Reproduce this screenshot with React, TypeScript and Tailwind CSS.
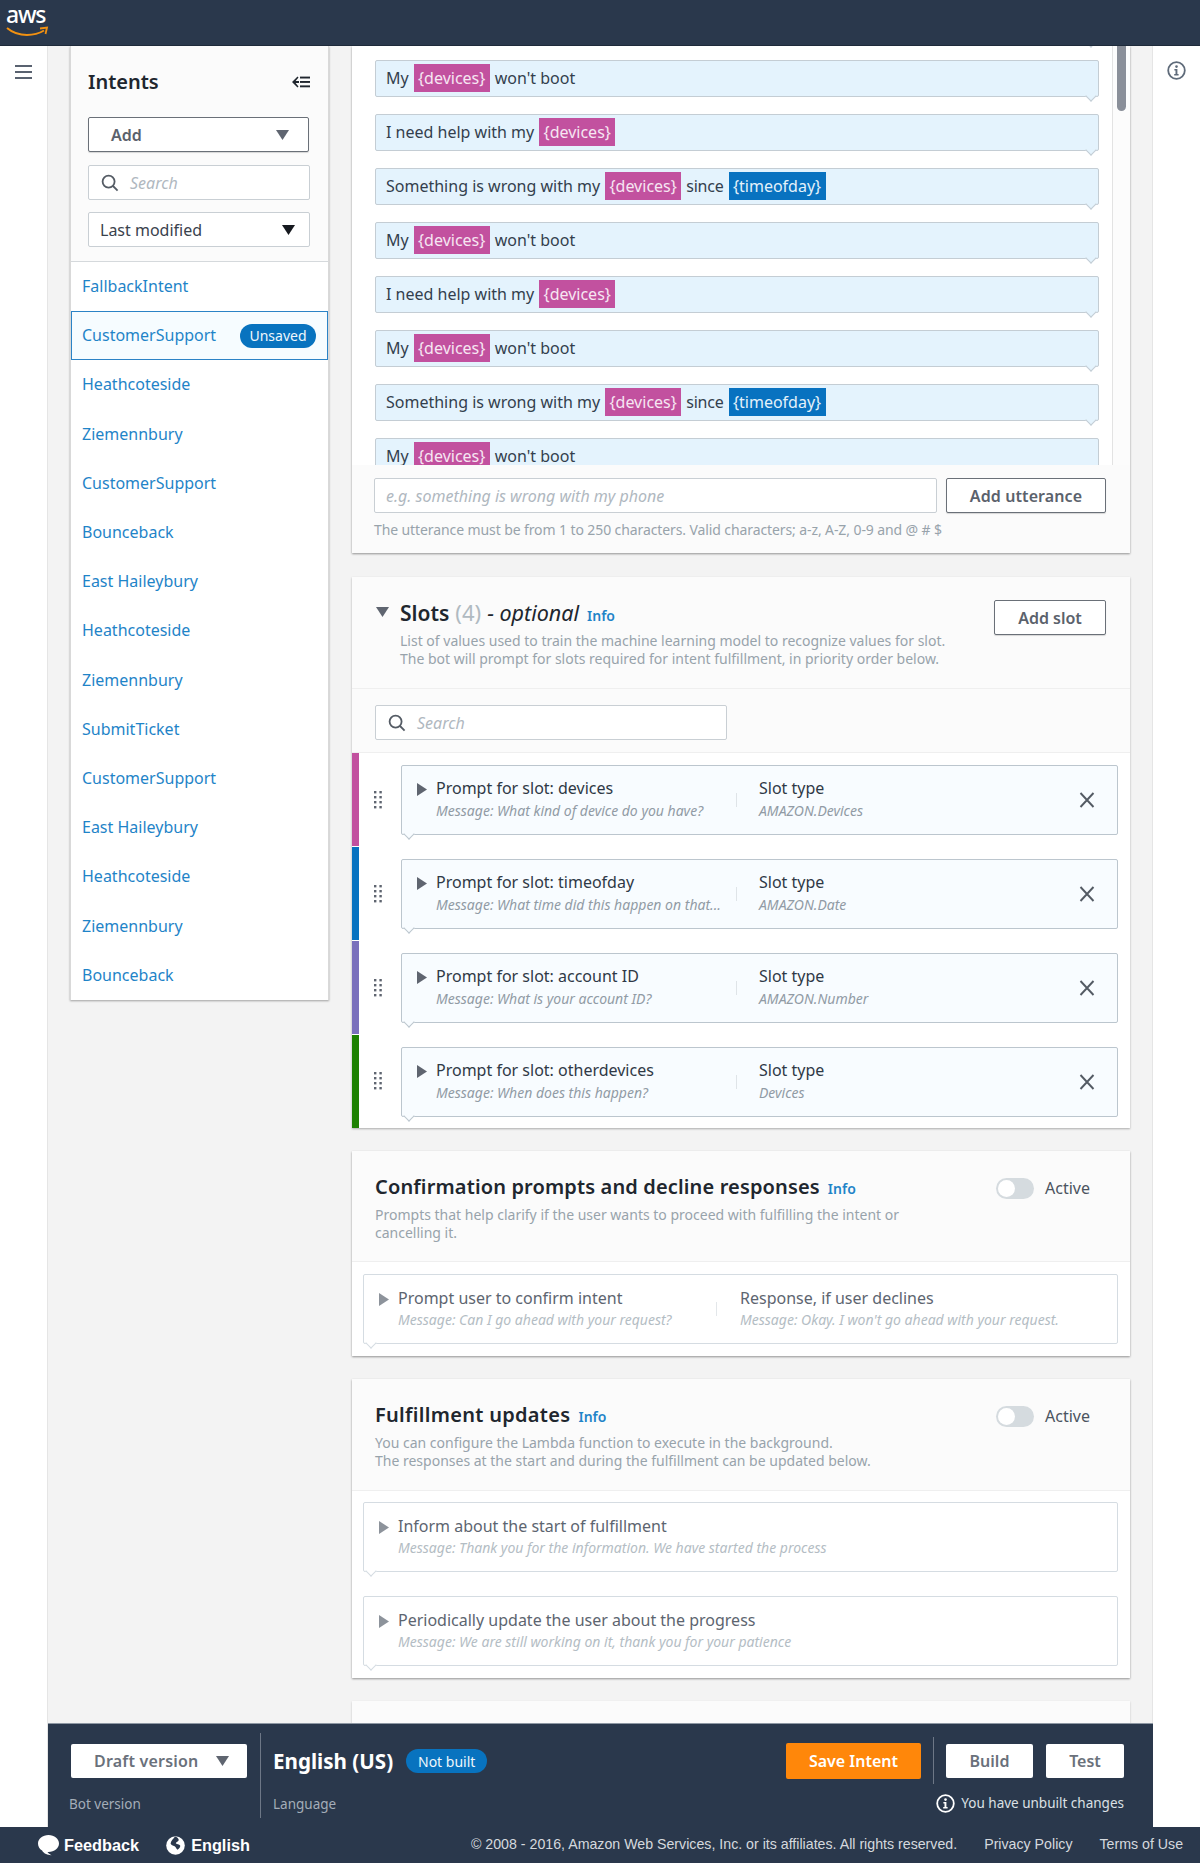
import React from "react";

const Chip = ({ c = "d" }: { c?: string }) =>
  c === "d" ? (
    <span className="mx-[5px] h-[28px] w-[76px] bg-[#c2519f] text-center leading-[28px] text-[#f6e6f2]">{"{devices}"}</span>
  ) : (
    <span className="mx-[5px] h-[28px] w-[97px] bg-[#0872c0] text-center leading-[28px] text-[#e3f1fa]">{"{timeofday}"}</span>
  );

const Utt = ({ children }: { children?: React.ReactNode }) => (
  <div className="relative mb-[17px] ml-[23px] flex h-[37px] w-[724px] items-center whitespace-pre rounded-[2px] border border-[#c4cdd4] bg-[#e4f3fd] pb-[1px] pl-[10px] text-[16px] text-[#333f4d]">
    {children}
    <span className="absolute bottom-[-4px] right-[3px] size-[8px] rotate-45 border-b border-r border-[#c4cdd4] bg-[#e4f3fd]" />
  </div>
);

const A = () => (<Utt>My<Chip />won't boot</Utt>);
const B = () => (<Utt>I need help with my<Chip /></Utt>);
const C = () => (<Utt>Something is wrong with my<Chip /><span className="tracking-[-0.2px]">since</span><Chip c="t" /></Utt>);

const Tri = ({ cls }: { cls: string }) => (
  <svg width="13" height="10" viewBox="0 0 13 10" className={cls}><path d="M0 0h13L6.500 10z" fill="currentColor" /></svg>
);
const RightTri = ({ cls }: { cls: string }) => (
  <svg width="10" height="13" viewBox="0 0 10 13" className={cls}><path d="M0 0l10 6.500L0 13z" fill="currentColor" /></svg>
);
const SearchIcon = () => (
  <svg width="18" height="18" viewBox="0 0 18 18" fill="none" stroke="#545b64" strokeWidth="1.8" className="shrink-0"><circle cx="7.6" cy="7.6" r="6" /><path d="M12 12l4.6 4.6" /></svg>
);
const InfoIcon = ({ color, size = 19 }: { color: string; size?: number }) => (
  <svg width={size} height={size} viewBox="0 0 19 19" className="shrink-0">
    <circle cx="9.5" cy="9.5" r="8.3" fill="none" stroke={color} strokeWidth="1.8" />
    <circle cx="9.5" cy="5.6" r="1.3" fill={color} />
    <path d="M7.4 8h3v5h1.2v1.4H7.2V13h1.3V9.4H7.4z" fill={color} />
  </svg>
);
const Info = ({ cls = "" }: { cls?: string }) => (
  <span className={`text-[14px] font-semibold text-[#1f84c8] ${cls}`}>Info</span>
);
const Handle = () => (
  <svg width="8" height="18" viewBox="0 0 8 18" fill="#5f6570" className="shrink-0">
    {[1, 6, 11, 16].map((y) => (
      <g key={y}><rect x="0" y={y - 1} width="2.4" height="2.4" /><rect x="5.4" y={y - 1} width="2.4" height="2.4" /></g>
    ))}
  </svg>
);

const CardTail = ({ border, bg }: { border: string; bg: string }) => (
  <span className={`absolute bottom-[-4px] left-[3px] size-[8px] rotate-45 border-b border-r ${border} ${bg}`} />
);

const Slot = ({ color, h, title, msg, type }: { color: string; h: string; title: string; msg: string; type: string }) => (
  <div className={`flex ${h}`}>
    <div className={`h-[93px] w-[7px] ${color}`} />
    <div className="flex w-[42px] items-center pl-[15px] pb-[1px]"><Handle /></div>
    <div className="relative mt-[12px] flex h-[70px] w-[717px] items-center rounded-[2px] border border-[#bcc6ce] bg-[#f8fcff]">
      <div className="flex w-[334px] items-start pb-[2px] pl-[15px]">
        <RightTri cls="mt-[7px] shrink-0 text-[#5f6570]" />
        <div className="ml-[9px] min-w-0">
          <div className="text-[16px] leading-[24px] text-[#2f3946]">{title}</div>
          <div className="whitespace-nowrap text-[14px] italic leading-[22px] text-[#919ba5]">{msg}</div>
        </div>
      </div>
      <div className="h-[14px] w-px bg-[#dfe4e8]" />
      <div className="flex-1 pb-[2px] pl-[22px]">
        <div className="text-[16px] leading-[24px] text-[#2f3946]">Slot type</div>
        <div className="text-[14px] italic leading-[22px] text-[#919ba5]">{type}</div>
      </div>
      <svg width="16" height="18" viewBox="0 0 16 18" fill="none" stroke="#545b64" strokeWidth="1.9" className="mr-[22px] shrink-0"><path d="M1.5 2l13 14M14.5 2l-13 14" /></svg>
      <CardTail border="border-[#bcc6ce]" bg="bg-[#f8fcff]" />
    </div>
  </div>
);

const Muted = ({ title, msg, title2, msg2 }: { title: string; msg: string; title2?: string; msg2?: string }) => (
  <div className="relative ml-[11px] flex h-[70px] w-[755px] items-center rounded-[2px] border border-[#d5dce2] bg-white">
    <div className={`flex items-start pb-[2px] pl-[15px] ${title2 ? "w-[352px]" : "flex-1"}`}>
      <RightTri cls="mt-[7px] shrink-0 text-[#8d939b]" />
      <div className="ml-[9px]">
        <div className="text-[16px] leading-[24px] text-[#5d6570]">{title}</div>
        <div className="mt-[-1px] whitespace-nowrap text-[14px] italic leading-[22px] text-[#b4bdc4]">{msg}</div>
      </div>
    </div>
    {title2 && <div className="h-[14px] w-px bg-[#e3e7ea]" />}
    {title2 && (
      <div className="flex-1 pb-[2px] pl-[23px]">
        <div className="text-[16px] leading-[24px] text-[#5d6570]">{title2}</div>
        <div className="mt-[-1px] whitespace-nowrap text-[14px] italic leading-[22px] text-[#b4bdc4]">{msg2}</div>
      </div>
    )}
    <CardTail border="border-[#d5dce2]" bg="bg-white" />
  </div>
);

const Toggle = () => (
  <div className="flex items-center">
    <div className="flex h-[21px] w-[38px] items-center rounded-full bg-[#d5dbdf] pl-[2px]">
      <div className="size-[17px] rounded-full bg-white" />
    </div>
    <span className="ml-[11px] text-[16px] text-[#4b5460]">Active</span>
  </div>
);

const Head = ({ title, h, track, children }: { title: string; h: string; track: string; children: React.ReactNode }) => (
  <div className={`relative border-b border-[#efefef] bg-[#fbfbfb] pl-[23px] pr-[39px] pt-[21px] ${h}`}>
    <div className="flex items-start justify-between">
      <div className="flex items-baseline">
        <span className={`text-[20px] font-semibold leading-[30px] text-[#20262e] ${track}`}>{title}</span>
        <Info cls="ml-[8px]" />
      </div>
      <div className="mt-[4px] pr-[1px]"><Toggle /></div>
    </div>
    <div className="mt-[4px] text-[14px] leading-[18px] text-[#98a3ab]">{children}</div>
  </div>
);

const items = ["FallbackIntent", "CustomerSupport", "Heathcoteside", "Ziemennbury", "CustomerSupport", "Bounceback", "East Haileybury", "Heathcoteside", "Ziemennbury", "SubmitTicket", "CustomerSupport", "East Haileybury", "Heathcoteside", "Ziemennbury", "Bounceback"];

const Sidebar = () => (
  <div className="h-[954px] w-[259px] shrink-0 border-x border-[#d9d9d9] bg-white shadow-[0_1px_2px_rgba(0,0,0,0.35)]">
    <div className="h-[216px] border-b border-[#d5d9dc] bg-[#fbfbfb] px-[17px] pt-[21px]">
      <div className="flex h-[30px] items-center justify-between">
        <span className="text-[20px] font-semibold text-[#20262e]">Intents</span>
        <svg width="18" height="12" viewBox="0 0 18 12" fill="#20262e" className="mr-[1px]">
          <path d="M5.5 0.5L0 6l5.5 5.500 1-1L3.600 7H7V5H3.600l2.900-3.500z" />
          <rect x="8" y="0.6" width="10" height="1.9" /><rect x="8" y="5" width="10" height="1.9" /><rect x="8" y="9.4" width="10" height="1.9" />
        </svg>
      </div>
      <div className="mt-[20px] flex h-[35px] w-[221px] items-center justify-between rounded-[2px] border border-[#6a7078] bg-white pl-[22px] pr-[19px] shadow-[0_1px_1px_rgba(0,0,0,0.15)]">
        <span className="text-[16px] font-semibold text-[#5b626c]">Add</span>
        <Tri cls="text-[#5f6570]" />
      </div>
      <div className="mt-[13px] flex h-[35px] w-[222px] items-center rounded-[2px] border border-[#c9cfd4] bg-white pl-[12px]">
        <SearchIcon />
        <span className="ml-[11px] text-[16px] italic text-[#b0b8bf]">Search</span>
      </div>
      <div className="mt-[12px] flex h-[35px] w-[222px] items-center justify-between rounded-[2px] border border-[#c9cfd4] bg-white pl-[11px] pr-[14px]">
        <span className="text-[16px] text-[#3a424d]">Last modified</span>
        <Tri cls="text-[#16191f]" />
      </div>
    </div>
    {items.map((t, i) =>
      i === 1 ? (
        <div key={i} className="flex h-[49.2px] items-center justify-between border border-[#2b83c6] bg-[#f6fcff] pl-[10px] pr-[11px] text-[16px] text-[#1f84c8]">
          <span className="pb-[1px]">{t}</span>
          <span className="flex h-[24px] w-[76px] items-center justify-center rounded-full bg-[#0873bf] text-[14px] text-[#eef7fc]">Unsaved</span>
        </div>
      ) : (
        <div key={i} className="flex h-[49.2px] items-center pb-[1px] pl-[11px] text-[16px] text-[#1f84c8]">{t}</div>
      )
    )}
  </div>
);

const UtteranceCard = () => (
  <div className="mb-[24px] h-[507px] overflow-hidden bg-white shadow-[0_1px_2px_rgba(0,0,0,0.4)]">
    <div className="relative h-[419px] overflow-hidden">
      <div className="mt-[-40px]">
        <Utt /><A /><B /><C /><A /><B /><A /><C /><A />
      </div>
      <div className="absolute right-0 top-0 h-full w-[18px] border-l border-[#e3e3e3] bg-[#fcfcfc]">
        <div className="ml-[4px] h-[65px] w-[9px] rounded-b-full bg-[#8a8f99]" />
      </div>
    </div>
    <div className="h-[88px] bg-[#fbfbfb] pl-[22px] pt-[13px]">
      <div className="flex">
        <div className="flex h-[35px] w-[563px] items-center rounded-[2px] border border-[#c9cfd4] bg-white pl-[11px] text-[16px] italic text-[#b0b8bf]">e.g. something is wrong with my phone</div>
        <div className="ml-[9px] flex h-[35px] w-[160px] items-center justify-center rounded-[2px] border border-[#6a7078] bg-white text-[16px] font-semibold tracking-[0.1px] text-[#5b626c] shadow-[0_1px_1px_rgba(0,0,0,0.15)]">Add utterance</div>
      </div>
      <div className="mt-[8px] text-[14px] leading-[18px] tracking-[-0.1px] text-[#98a3ab]">The utterance must be from 1 to 250 characters. Valid characters; a-z, A-Z, 0-9 and @ # $</div>
    </div>
  </div>
);

const SlotsCard = () => (
  <div className="mb-[23px] bg-white shadow-[0_1px_2px_rgba(0,0,0,0.3)]">
    <div className="relative flex h-[112px] border-b border-[#efefef] bg-[#fbfbfb] pl-[24px] pt-[20px]">
      <Tri cls="mt-[10px] text-[#5f6570]" />
      <div className="ml-[11px] flex-1">
        <div className="flex items-baseline">
          <span className="text-[21px] font-semibold leading-[30px] text-[#20262e]">Slots</span>
          <span className="ml-[6px] text-[22px] leading-[30px] text-[#b0bac1]">(4)</span>
          <span className="ml-[6px] text-[21.5px] italic leading-[30px] text-[#20262e]">- optional</span>
          <Info cls="ml-[8px]" />
        </div>
        <div className="mt-[4px] text-[14px] leading-[18px] text-[#98a3ab]">
          List of values used to train the machine learning model to recognize values for slot.<br />
          The bot will prompt for slots required for intent fulfillment, in priority order below.
        </div>
      </div>
      <div className="mr-[24px] mt-[3px] flex h-[35px] w-[112px] items-center justify-center rounded-[2px] border border-[#6a7078] bg-white text-[16px] font-semibold text-[#5b626c] shadow-[0_1px_1px_rgba(0,0,0,0.15)]">Add slot</div>
    </div>
    <div className="h-[64px] border-b border-[#efefef] bg-[#fbfbfb] pl-[23px] pt-[16px]">
      <div className="flex h-[35px] w-[352px] items-center rounded-[2px] border border-[#c9cfd4] bg-white pl-[12px]">
        <SearchIcon />
        <span className="ml-[11px] text-[16px] italic text-[#b0b8bf]">Search</span>
      </div>
    </div>
    <Slot h="h-[94px]" color="bg-[#c2519f]" title="Prompt for slot: devices" msg="Message: What kind of device do you have?" type="AMAZON.Devices" />
    <Slot h="h-[94px]" color="bg-[#0872c0]" title="Prompt for slot: timeofday" msg="Message: What time did this happen on that..." type="AMAZON.Date" />
    <Slot h="h-[94px]" color="bg-[#7a70bc]" title="Prompt for slot: account ID" msg="Message: What is your account ID?" type="AMAZON.Number" />
    <Slot h="h-[93px]" color="bg-[#1d8102]" title="Prompt for slot: otherdevices" msg="Message: When does this happen?" type="Devices" />
  </div>
);

const Bottom = () => (
  <div className="flex h-[104px] shrink-0 border-t border-[#8d97a3] bg-[#2a384c] text-[13.5px]">
    <div className="w-[212px] pl-[21px] pt-[20px]">
      <div className="ml-[2px] flex h-[34px] w-[176px] items-center justify-between rounded-[2px] bg-white pl-[23px] pr-[18px] text-[16px] font-semibold tracking-[0.2px] text-[#6a717b]">
        <span>Draft version</span><Tri cls="text-[#5f6570]" />
      </div>
      <div className="mt-[16px] text-[#a4adb8]">Bot version</div>
    </div>
    <div className="mt-[9px] h-[85px] w-px bg-[#6d7786]" />
    <div className="flex-1 pl-[12px] pt-[20px]">
      <div className="flex h-[34px] items-center">
        <span className="text-[20.6px] font-bold text-white">English (US)</span>
        <span className="ml-[13px] flex h-[24px] w-[81px] items-center justify-center rounded-full bg-[#0873bf] text-[14px] text-[#eef7fc]">Not built</span>
      </div>
      <div className="mt-[16px] text-[#a4adb8]">Language</div>
    </div>
    <div className="w-[367px] pr-[29px] pt-[19px]">
      <div className="flex items-start justify-end">
        <div className="flex h-[36px] w-[135px] items-center justify-center rounded-[2px] bg-[#ff870a] text-[16px] font-semibold text-white">Save Intent</div>
        <div className="ml-[12px] mr-[12px] mt-[-6px] h-[47px] w-px bg-[#6d7786]" />
        <div className="mt-[1px] flex h-[34px] w-[87px] items-center justify-center rounded-[2px] bg-white text-[16px] font-semibold text-[#6a717b]">Build</div>
        <div className="ml-[13px] mt-[1px] flex h-[34px] w-[78px] items-center justify-center rounded-[2px] bg-white text-[16px] font-semibold text-[#6a717b]">Test</div>
      </div>
      <div className="mt-[9px] flex items-center justify-end text-[#dbe0e5]">
        <InfoIcon color="#ffffff" />
        <span className="ml-[6px]">You have unbuilt changes</span>
      </div>
    </div>
  </div>
);

const Footer = () => (
  <div className="flex h-[36px] shrink-0 items-center bg-[#2a384c] pl-[37px] font-['Liberation_Sans',sans-serif] text-[14.2px] text-[#d5d9de]">
    <svg width="23" height="22" viewBox="0 0 23 22" fill="#ffffff" className="shrink-0"><path d="M11.5 1C17.3 1 22 4.8 22 9.5S17.3 18 11.5 18c-.4 0-.7 0-1 0 .9 1.2 2.4 2.4 4 3.2-3.4.1-7.6-1.2-9.4-4.6C2.400 15 1 12.400 1 9.500 1 4.800 5.700 1 11.500 1z" /></svg>
    <span className="ml-[4px] text-[16.3px] font-bold text-white">Feedback</span>
    <svg width="19" height="19" viewBox="0 0 19 19" className="ml-[27px] shrink-0"><circle cx="9.500" cy="9.500" r="9.300" fill="#ffffff" /><path d="M9 .6c2 .8 3.400 1.600 3.800 3.300-.6 1.600-2.400 1.700-3 3.300 1.200 1.400 3.400.8 4.400 2.400.300 1.600-1 3.200-2.600 4.100-1.400-.600-1.600-2.400-3-3.400C7 9.200 5 9 4.600 7.400 5 5 7.400 2.800 9 .6z" fill="#2a384c" /></svg>
    <span className="ml-[6px] text-[16.3px] font-bold text-white">English</span>
    <span className="ml-[221px] whitespace-nowrap">© 2008 - 2016, Amazon Web Services, Inc. or its affiliates. All rights reserved.</span>
    <span className="ml-[27px] whitespace-nowrap">Privacy Policy</span>
    <span className="ml-[27px] whitespace-nowrap">Terms of Use</span>
  </div>
);

export default function App() {
  return (
    <div className="flex h-[1863px] w-[1200px] flex-col overflow-hidden bg-white font-['Noto_Sans',sans-serif]">
      <header className="relative z-10 flex h-[46px] shrink-0 border-b border-[#1e2a3a] bg-[#2a384c] pl-[6px]">
        <div className="relative w-[42px]">
          <span className="absolute left-0 top-0 text-[23px] font-medium leading-[28px] tracking-[-1.2px] text-white">aws</span>
          <svg width="43" height="11" viewBox="0 0 43 11" fill="none" className="absolute left-0 top-[26px]">
            <path d="M1 2c6 5 13 7 20 7s12-1.500 17-4.500" stroke="#f29111" strokeWidth="2" />
            <path d="M34 2.500l7-1-1.500 6.500" stroke="#f29111" strokeWidth="1.800" />
          </svg>
        </div>
      </header>
      <div className="flex min-h-0 flex-1">
        <div className="w-[47px] shrink-0 pl-[15px] pt-[19px]">
          <svg width="17" height="14" viewBox="0 0 17 14" fill="#596270"><rect y="0" width="17" height="2" /><rect y="6" width="17" height="2" /><rect y="12" width="17" height="2" /></svg>
        </div>
        <div className="flex min-w-0 flex-1 flex-col border-l border-[#e5e5e5]">
          <div className="flex min-h-0 flex-1 gap-[23px] overflow-hidden border-r border-[#e5e5e5] bg-[#f3f3f3] pl-[22px]">
            <Sidebar />
            <div className="w-[778px] shrink-0">
              <UtteranceCard />
              <SlotsCard />
              <div className="mb-[23px] bg-white shadow-[0_1px_2px_rgba(0,0,0,0.4)]">
                <Head title="Confirmation prompts and decline responses" h="h-[111px]" track="tracking-[0.14px]">
                  Prompts that help clarify if the user wants to proceed with fulfilling the intent or<br />cancelling it.
                </Head>
                <div className="h-[94px] pt-[12px]">
                  <Muted title="Prompt user to confirm intent" msg="Message: Can I go ahead with your request?" title2="Response, if user declines" msg2="Message: Okay. I won't go ahead with your request." />
                </div>
              </div>
              <div className="mb-[23px] bg-white shadow-[0_1px_2px_rgba(0,0,0,0.4)]">
                <Head title="Fulfillment updates" h="h-[112px]" track="tracking-[0.3px]">
                  You can configure the Lambda function to execute in the background.<br />The responses at the start and during the fulfillment can be updated below.
                </Head>
                <div className="h-[187px] pt-[11px]">
                  <Muted title="Inform about the start of fulfillment" msg="Message: Thank you for the information. We have started the process" />
                  <div className="h-[24px]" />
                  <Muted title="Periodically update the user about the progress" msg="Message: We are still working on it, thank you for your patience" />
                </div>
              </div>
              <div className="h-[100px] bg-[#fbfbfb] shadow-[0_1px_2px_rgba(0,0,0,0.2)]" />
            </div>
          </div>
          <Bottom />
        </div>
        <div className="w-[47px] shrink-0 pl-[14px] pt-[15px]">
          <InfoIcon color="#5f6b7a" />
        </div>
      </div>
      <Footer />
    </div>
  );
}
